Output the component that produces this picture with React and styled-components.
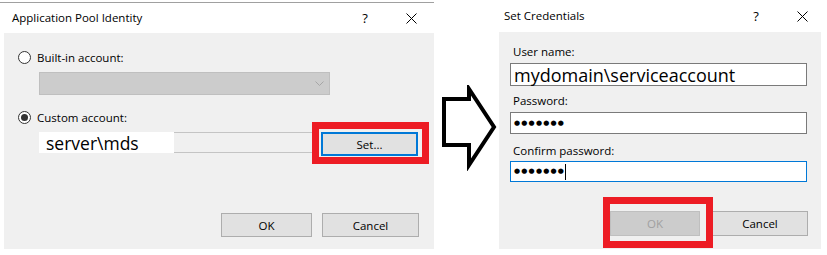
import React from 'react'
import styled, { createGlobalStyle } from 'styled-components'

const Global = createGlobalStyle`
html, body { margin: 0; padding: 0; background: #fff; }
body {
  font-family: "Open Sans", "Noto Sans", sans-serif;
  font-size: 11.5px;
  color: #000;
}
`

const Stage = styled.div`
display: flex;
width: 827px;
height: 255px;
overflow: hidden;
`

const Dialog = styled.section`
display: flex;
flex-direction: column;
flex: none;
width: ${p => p.$w}px;
margin-top: ${p => p.$top}px;
border-top: ${p => (p.$line ? '1px solid #a0a0a0' : 'none')};
`

const TitleBar = styled.header`
display: flex;
align-items: center;
height: ${p => p.$h}px;
padding-left: ${p => p.$pad}px;
background: #fff;
`

const Caption = styled.span`
flex: 1;
line-height: 16px;
`

const TitleButton = styled.span`
display: flex;
align-items: center;
justify-content: center;
width: 46px;
height: 100%;
font-size: 13px;
`

const Body = styled.div`
display: flex;
flex-direction: column;
height: ${p => p.$h}px;
margin: ${p => p.$margin};
padding: ${p => p.$pad};
background: #f0f0f0;
box-sizing: border-box;
`

const RadioRow = styled.label`
display: flex;
align-items: center;
height: 16px;
margin-top: ${p => p.$mt}px;
padding-left: 14px;
`

const Radio = styled.span`
position: relative;
width: 13px;
height: 13px;
border: 1px solid #333;
border-radius: 50%;
background: #fff;
box-sizing: border-box;
margin-right: 6px;
&::after {
  content: '';
  display: ${p => (p.$on ? 'block' : 'none')};
  position: absolute;
  left: 2px;
  top: 2px;
  width: 7px;
  height: 7px;
  border-radius: 50%;
  background: #333;
}
`

const Combo = styled.div`
display: flex;
align-items: center;
justify-content: flex-end;
width: 291px;
height: 23px;
margin: 7px 0 0 35px;
padding-right: 5px;
background: #cccccc;
border: 1px solid #bfbfbf;
box-sizing: border-box;
`

const AccountRow = styled.div`
display: flex;
align-items: flex-start;
margin: 7px 0 0 35px;
`

const ReadBox = styled.div`
display: flex;
width: 273px;
height: 21px;
border-top: 1px solid #c4c4c4;
border-bottom: 1px solid #c4c4c4;
box-sizing: border-box;
`

const EditPatch = styled.span`
display: flex;
align-items: center;
width: 135px;
margin-top: -1px;
height: 21px;
padding-left: 7px;
box-sizing: border-box;
background: #fff;
font-size: 17.5px;
`

const Highlight = styled.div`
position: relative;
flex: none;
margin-left: ${p => p.$ml || 0}px;
&::after {
  content: '';
  position: absolute;
  inset: ${p => p.$inset};
  border: 7px solid #ed1c24;
  pointer-events: none;
}
`

const Button = styled.button`
display: flex;
align-items: center;
justify-content: center;
width: ${p => p.$w}px;
height: ${p => p.$h}px;
padding: 0;
font: inherit;
font-size: 11.5px;
color: ${p => (p.$disabled ? '#a0a0a0' : '#000')};
background: ${p => (p.$disabled ? '#cccccc' : '#e1e1e1')};
border: ${p => (p.$focus ? '2px solid #0078d7' : p.$disabled ? '1px solid #bfbfbf' : '1px solid #adadad')};
box-sizing: border-box;
`

const Footer = styled.div`
display: flex;
justify-content: flex-end;
gap: ${p => p.$gap}px;
margin-top: auto;
`

const ArrowCol = styled.div`
flex: none;
width: 65px;
padding: 85px 0 0 6px;
box-sizing: border-box;
`

const Label = styled.div`
line-height: 16px;
padding-left: 3px;
margin-top: ${p => p.$mt}px;
`

const Field = styled.div`
display: flex;
align-items: center;
width: 297px;
height: ${p => p.$h}px;
margin-top: ${p => p.$mt}px;
padding-left: 3px;
background: #fff;
border: 1px solid ${p => (p.$focus ? '#0078d7' : '#7a7a7a')};
box-sizing: border-box;
font-size: ${p => (p.$big ? '18px' : '11.5px')};
`

const Dots = styled.span`
font-family: "DejaVu Sans", sans-serif;
font-size: 7px;
letter-spacing: 1.2px;
line-height: 1;
`

const Caret = styled.span`
width: 1px;
height: 16px;
background: #000;
margin-left: 0;
`

const CloseIcon = () => (
  <svg width="11" height="11" viewBox="0 0 11 11">
    <path d="M0.5 0.5 L10.5 10.5 M10.5 0.5 L0.5 10.5" stroke="#000" strokeWidth="1" fill="none" />
  </svg>
)

const Chevron = () => (
  <svg width="9" height="5" viewBox="0 0 9 5">
    <path d="M0.5 0.5 L4.5 4.5 L8.5 0.5" stroke="#a6a6a6" strokeWidth="1" fill="none" />
  </svg>
)

const Arrow = () => (
  <svg width="58" height="86" viewBox="0 0 58 86">
    <polygon
      points="4,14 29,14 29,4 54,42 29,80 29,60 4,60"
      fill="#fff"
      stroke="#000"
      strokeWidth="4"
      strokeLinejoin="miter"
    />
  </svg>
)

const Controls = () => (
  <>
    <TitleButton>?</TitleButton>
    <TitleButton><CloseIcon /></TitleButton>
  </>
)

export default function App() {
  return (
    <>
      <Global />
      <Stage>
        <Dialog $w={434} $top={2} $line>
          <TitleBar $h={30} $pad={12}>
            <Caption>Application Pool Identity</Caption>
            <Controls />
          </TitleBar>
          <Body $h={216} $margin="0 0 0 4px" $pad="16px 15px 12px 0">
            <RadioRow $mt={0}>
              <Radio />
              Built-in account:
            </RadioRow>
            <Combo><Chevron /></Combo>
            <RadioRow $mt={14}>
              <Radio $on />
              Custom account:
            </RadioRow>
            <AccountRow>
              <ReadBox>
                <EditPatch>server\mds</EditPatch>
              </ReadBox>
              <Highlight $ml={9} $inset="-10px -11px -8px -9px">
                <Button $w={97} $h={24} $focus>Set...</Button>
              </Highlight>
            </AccountRow>
            <Footer $gap={10}>
              <Button $w={91} $h={24}>OK</Button>
              <Button $w={97} $h={24}>Cancel</Button>
            </Footer>
          </Body>
        </Dialog>

        <ArrowCol><Arrow /></ArrowCol>

        <Dialog $w={326} $top={0}>
          <TitleBar $h={32} $pad={5}>
            <Caption>Set Credentials</Caption>
            <Controls />
          </TitleBar>
          <Body $h={217} $margin="0 4px 0 0" $pad="12px 13px 13px 11px">
            <Label $mt={0}>User name:</Label>
            <Field $h={23} $mt={3} $big>mydomain\serviceaccount</Field>
            <Label $mt={7}>Password:</Label>
            <Field $h={22} $mt={3}><Dots>●●●●●●●</Dots></Field>
            <Label $mt={9}>Confirm password:</Label>
            <Field $h={21} $mt={2} $focus><Dots>●●●●●●●</Dots><Caret /></Field>
            <Footer $gap={12}>
              <Highlight $inset="-14px -13px -12px -7px">
                <Button $w={90} $h={25} $disabled>OK</Button>
              </Highlight>
              <Button $w={96} $h={25}>Cancel</Button>
            </Footer>
          </Body>
        </Dialog>
      </Stage>
    </>
  )
}
